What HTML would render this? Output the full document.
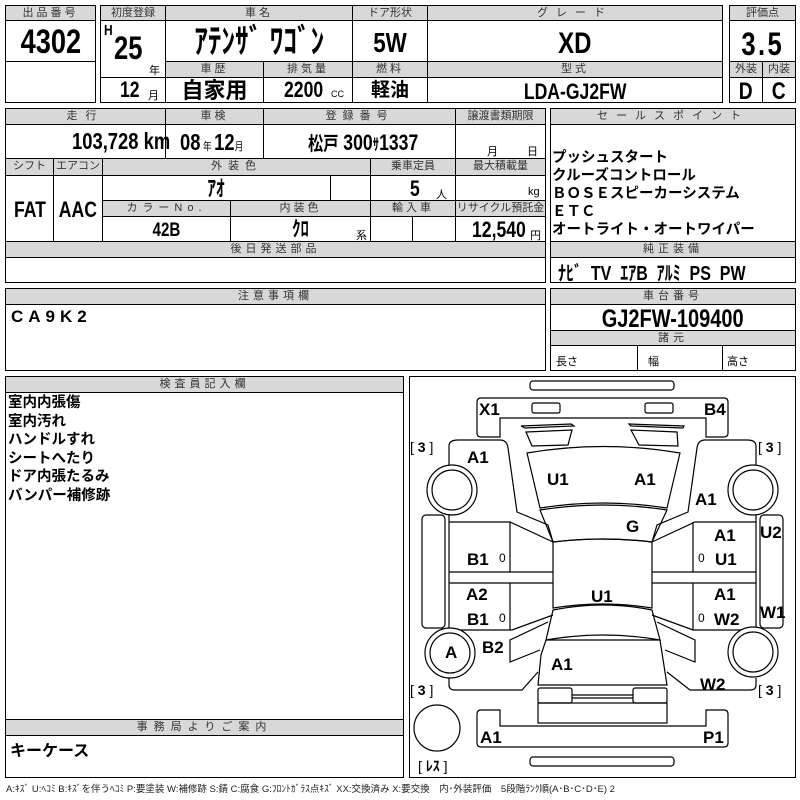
<!DOCTYPE html>
<html><head><meta charset="utf-8"><style>
*{margin:0;padding:0;box-sizing:border-box}
body{width:800px;height:800px;background:#fff;position:relative;overflow:hidden;font-family:"Liberation Sans","Noto Sans CJK JP",sans-serif;color:#000}
.b{position:absolute;border:1.5px solid #000}
.h{position:absolute;background:#d8d8d8;border:1px solid #000;font-size:11px;color:#333;text-align:center;line-height:14px;letter-spacing:3px;font-family:"Liberation Sans","Noto Sans CJK JP",sans-serif}
.c{position:absolute;border:1px solid #000;font-weight:bold;text-align:center;white-space:nowrap;overflow:hidden}
.t{position:absolute;font-weight:bold;white-space:nowrap}
.s{font-size:11px;font-weight:normal}
.n{display:inline-block;transform:scaleX(.8)}
.tl{transform-origin:left center}
</style></head><body>
<div class="b" style="left:5px;top:5px;width:91px;height:98px"></div>
<div class="h" style="left:5px;top:5px;width:91px;height:16px">出品番号</div>
<div class="c" style="left:5px;top:20px;width:91px;height:42px;font-size:34px;line-height:42px"><span class="n">4302</span></div>
<div class="b" style="left:100px;top:5px;width:623px;height:98px"></div>
<div class="h" style="left:100px;top:5px;width:66px;height:16px;letter-spacing:0">初度登録</div>
<div class="h" style="left:165px;top:5px;width:188px;height:16px">車名</div>
<div class="h" style="left:352px;top:5px;width:76px;height:16px;letter-spacing:0">ドア形状</div>
<div class="h" style="left:427px;top:5px;width:296px;height:16px;letter-spacing:8px">グレード</div>
<div class="c" style="left:100px;top:20px;width:66px;height:58px;border-bottom:none"></div>
<div class="t" style="left:104px;top:22px;font-size:15px"><span class="n tl">H</span></div>
<div class="t" style="left:114px;top:30px;font-size:32px"><span class="n tl">25</span></div>
<div class="t s" style="left:149px;top:62px">年</div>
<div class="c" style="left:165px;top:20px;width:188px;height:42px;font-size:34px;line-height:42px"><span class="n">ｱﾃﾝｻﾞ ﾜｺﾞﾝ</span></div>
<div class="c" style="left:352px;top:20px;width:76px;height:42px;font-size:28px;line-height:44px"><span class="n">5W</span></div>
<div class="c" style="left:427px;top:20px;width:296px;height:42px;font-size:30px;line-height:46px"><span class="n">XD</span></div>
<div class="h" style="left:165px;top:61px;width:99px;height:17px">車歴</div>
<div class="h" style="left:263px;top:61px;width:90px;height:17px">排気量</div>
<div class="h" style="left:352px;top:61px;width:76px;height:17px">燃料</div>
<div class="h" style="left:427px;top:61px;width:296px;height:17px">型式</div>
<div class="c" style="left:100px;top:77px;width:66px;height:26px"></div>
<div class="t" style="left:120px;top:77px;font-size:22px"><span class="n tl">12</span></div><div class="t s" style="left:148px;top:87px">月</div>
<div class="c" style="left:165px;top:77px;width:99px;height:26px;font-size:22px;line-height:26px">自家用</div>
<div class="c" style="left:263px;top:77px;width:90px;height:26px"></div>
<div class="t" style="left:284px;top:77px;font-size:22px"><span class="n tl">2200</span></div><div class="t s" style="left:331px;top:89px;font-size:9px">CC</div>
<div class="c" style="left:352px;top:77px;width:76px;height:26px;font-size:19px;line-height:26px">軽油</div>
<div class="c" style="left:427px;top:77px;width:296px;height:26px;font-size:22px;line-height:28px"><span class="n">LDA-GJ2FW</span></div>
<div class="b" style="left:729px;top:5px;width:67px;height:98px"></div>
<div class="h" style="left:729px;top:5px;width:67px;height:16px;letter-spacing:0">評価点</div>
<div class="c" style="left:729px;top:20px;width:67px;height:42px;font-size:32px;line-height:46px;letter-spacing:3px"><span class="n">3.5</span></div>
<div class="h" style="left:729px;top:61px;width:34px;height:17px;letter-spacing:0">外装</div>
<div class="h" style="left:762px;top:61px;width:34px;height:17px;letter-spacing:0">内装</div>
<div class="c" style="left:729px;top:77px;width:34px;height:26px;font-size:24px;line-height:28px"><span class="n">D</span></div>
<div class="c" style="left:762px;top:77px;width:34px;height:26px;font-size:24px;line-height:28px"><span class="n">C</span></div>
<div class="b" style="left:5px;top:108px;width:541px;height:175px"></div>
<div class="h" style="left:5px;top:108px;width:161px;height:17px;letter-spacing:8px">走行</div>
<div class="h" style="left:165px;top:108px;width:99px;height:17px">車検</div>
<div class="h" style="left:263px;top:108px;width:193px;height:17px;letter-spacing:6px">登録番号</div>
<div class="h" style="left:455px;top:108px;width:91px;height:17px;letter-spacing:0">譲渡書類期限</div>
<div class="c" style="left:5px;top:124px;width:161px;height:35px"></div>
<div class="t" style="left:72px;top:128px;font-size:23px"><span class="n tl">103,728 km</span></div>
<div class="c" style="left:165px;top:124px;width:99px;height:35px"></div>
<div class="t" style="left:180px;top:129px;font-size:23px"><span class="n tl">08<span class="s"> 年 </span>12<span class="s">月</span></span></div>
<div class="c" style="left:263px;top:124px;width:193px;height:35px"></div>
<div class="t" style="left:308px;top:129px;font-size:22px"><span class="n tl"><span style="font-size:19px">松戸</span> 300<span style="font-size:16px">ｻ</span>1337</span></div>
<div class="c" style="left:455px;top:124px;width:91px;height:35px"></div>
<div class="t s" style="left:487px;top:143px">月</div><div class="t s" style="left:527px;top:143px">日</div>
<div class="h" style="left:5px;top:158px;width:49px;height:18px;letter-spacing:0">シフト</div>
<div class="h" style="left:53px;top:158px;width:50px;height:18px;letter-spacing:0">エアコン</div>
<div class="h" style="left:102px;top:158px;width:269px;height:18px;letter-spacing:6px">外装色</div>
<div class="h" style="left:370px;top:158px;width:86px;height:18px;letter-spacing:0">乗車定員</div>
<div class="h" style="left:455px;top:158px;width:91px;height:18px;letter-spacing:0">最大積載量</div>
<div class="c" style="left:5px;top:175px;width:49px;height:67px;font-size:22px;line-height:67px"><span class="n">FAT</span></div>
<div class="c" style="left:53px;top:175px;width:50px;height:67px;font-size:22px;line-height:67px"><span class="n">AAC</span></div>
<div class="c" style="left:102px;top:175px;width:229px;height:26px;font-size:22px;line-height:26px"><span class="n">ｱｵ</span></div>
<div class="c" style="left:330px;top:175px;width:41px;height:26px"></div>
<div class="c" style="left:370px;top:175px;width:86px;height:26px"></div>
<div class="t" style="left:410px;top:176px;font-size:22px"><span class="n tl">5</span></div><div class="t s" style="left:436px;top:186px">人</div>
<div class="c" style="left:455px;top:175px;width:91px;height:26px"></div><div class="t s" style="left:528px;top:186px">kg</div>
<div class="h" style="left:102px;top:200px;width:129px;height:17px;letter-spacing:5px">カラーNo.</div>
<div class="h" style="left:230px;top:200px;width:141px;height:17px">内装色</div>
<div class="h" style="left:370px;top:200px;width:86px;height:17px">輸入車</div>
<div class="h" style="left:455px;top:200px;width:91px;height:17px;letter-spacing:0">リサイクル預託金</div>
<div class="c" style="left:102px;top:216px;width:129px;height:26px;font-size:19px;line-height:27px"><span class="n">42B</span></div>
<div class="c" style="left:230px;top:216px;width:141px;height:26px;font-size:21px;line-height:26px"><span class="n">ｸﾛ</span></div>
<div class="t s" style="left:356px;top:227px">系</div>
<div class="c" style="left:370px;top:216px;width:43px;height:26px"></div>
<div class="c" style="left:412px;top:216px;width:44px;height:26px"></div>
<div class="c" style="left:455px;top:216px;width:91px;height:26px"></div>
<div class="t" style="left:472px;top:217px;font-size:22px"><span class="n tl">12,540</span></div><div class="t s" style="left:530px;top:227px">円</div>
<div class="h" style="left:5px;top:241px;width:541px;height:17px;letter-spacing:4px">後日発送部品</div>
<div class="b" style="left:550px;top:108px;width:246px;height:150px"></div>
<div class="h" style="left:550px;top:108px;width:246px;height:17px;letter-spacing:8px">セールスポイント</div>
<div class="t" style="left:552px;top:149px;font-size:14.5px;line-height:18px">プッシュスタート<br>クルーズコントロール<br>ＢＯＳＥスピーカーシステム<br>ＥＴＣ<br>オートライト・オートワイパー</div>
<div class="b" style="left:550px;top:241px;width:246px;height:42px"></div>
<div class="h" style="left:550px;top:241px;width:246px;height:17px;letter-spacing:4px">純正装備</div>
<div class="t" style="left:558px;top:257px;font-size:20px"><span class="n tl">ﾅﾋﾞ&nbsp; TV&nbsp; ｴｱB&nbsp; ｱﾙﾐ&nbsp; PS&nbsp; PW</span></div>
<div class="b" style="left:5px;top:288px;width:541px;height:83px"></div>
<div class="h" style="left:5px;top:288px;width:541px;height:17px;letter-spacing:4px">注意事項欄</div>
<div class="t" style="left:11px;top:307px;font-size:17px;letter-spacing:5px">CA9K2</div>
<div class="b" style="left:550px;top:288px;width:246px;height:83px"></div>
<div class="h" style="left:550px;top:288px;width:246px;height:17px;letter-spacing:4px">車台番号</div>
<div class="c" style="left:550px;top:304px;width:246px;height:27px;font-size:25px;line-height:28px"><span class="n">GJ2FW-109400</span></div>
<div class="h" style="left:550px;top:330px;width:246px;height:16px;letter-spacing:4px">諸元</div>
<div class="c" style="left:550px;top:345px;width:88px;height:26px"></div>
<div class="c" style="left:637px;top:345px;width:86px;height:26px"></div>
<div class="c" style="left:722px;top:345px;width:74px;height:26px"></div>
<div class="t s" style="left:556px;top:353px">長さ</div><div class="t s" style="left:648px;top:353px">幅</div><div class="t s" style="left:727px;top:353px">高さ</div>
<div class="b" style="left:5px;top:376px;width:399px;height:402px"></div>
<div class="h" style="left:5px;top:376px;width:399px;height:17px;letter-spacing:4px">検査員記入欄</div>
<div class="t" style="left:8px;top:394px;font-size:14.5px;line-height:18.5px">室内内張傷<br>室内汚れ<br>ハンドルすれ<br>シートへたり<br>ドア内張たるみ<br>バンパー補修跡</div>
<div class="h" style="left:5px;top:719px;width:399px;height:17px;letter-spacing:6px">事務局よりご案内</div>
<div class="t" style="left:10px;top:737px;font-size:16px">キーケース</div>
<div class="b" style="left:409px;top:376px;width:387px;height:402px"></div>
<svg style="position:absolute;left:0;top:0" width="800" height="800" fill="none" stroke="#000" stroke-width="1.2">
<rect x="530" y="381" width="144" height="9" rx="3"/>
<path d="M477,402 Q477,398 481,398 L724,398 Q728,398 728,402 L728,433 Q728,437 724,437 L706,437 L706,418 L500,418 L500,437 L481,437 Q477,437 477,433 Z"/>
<rect x="532" y="403" width="28" height="10" rx="2"/><rect x="645" y="403" width="28" height="10" rx="2"/>
<path d="M521,426 L571,424 L574,426 L525,428 Z M629,424 L684,426 L683,428 L631,426 Z"/>
<path d="M526,432 L572,430 L568,445 L532,446 Z M631,430 L677,432 L678,446 L639,445 Z"/>
<path d="M527,453 Q603,440 680,453 L667,508 Q603,498 540,508 Z"/>
<path d="M540,510 Q603,500 667,510 L652,542 Q603,536 553,542 Z"/>
<path d="M553,542 Q603,536 652,542 L652,608 Q603,600 553,608 Z"/>
<path d="M553,610 Q603,600 652,610 L660,640 Q603,630 546,640 Z"/>
<path d="M546,640 L660,640 L667,685 L538,685 L541,655 Z"/>
<rect x="538" y="688" width="34" height="15" rx="2"/><rect x="633" y="688" width="34" height="15" rx="2"/>
<line x1="572" y1="695" x2="633" y2="695"/><line x1="572" y1="698" x2="633" y2="698"/>
<rect x="538" y="703" width="129" height="20"/>
<path d="M477,714 Q477,710 481,710 L500,710 L500,726 L706,726 L706,710 L724,710 Q728,710 728,714 L728,743 Q728,747 724,747 L481,747 Q477,747 477,743 Z"/>
<rect x="530" y="757" width="144" height="9" rx="3"/>
<path d="M449,465 L449,446 Q449,440 458,440 L500,440 Q507,440 508,448 L517,512 L548,525 L553,542"/>
<path d="M449,515 L449,630 L512,630 L553,615 M449,522 L510,522 L553,542 M449,572 L553,572 M449,583 L553,583"/>
<line x1="510" y1="522" x2="510" y2="572"/><line x1="510" y1="583" x2="510" y2="630"/>
<path d="M756,465 L756,446 Q756,440 747,440 L705,440 Q698,440 697,448 L688,512 L657,525 L652,542"/>
<path d="M756,515 L756,630 L693,630 L652,615 M756,522 L695,522 L652,542 M756,572 L652,572 M756,583 L652,583"/>
<line x1="693" y1="522" x2="693" y2="572"/><line x1="693" y1="583" x2="693" y2="630"/>
<path d="M449,678 L449,685 Q449,690 455,690 L522,690 L538,672 M540,650 L510,662 L510,640 L548,622"/>
<path d="M756,678 L756,685 Q756,690 750,690 L690,690 L667,672 M665,650 L695,662 L695,640 L657,622"/>
<rect x="422" y="515" width="23" height="113" rx="4"/><rect x="760" y="515" width="23" height="113" rx="4"/>
<circle cx="452" cy="490" r="25" fill="#fff"/><circle cx="452" cy="490" r="20"/>
<circle cx="753" cy="490" r="25" fill="#fff"/><circle cx="753" cy="490" r="20"/>
<circle cx="450" cy="653" r="25" fill="#fff"/><circle cx="450" cy="653" r="20"/>
<circle cx="753" cy="652" r="25" fill="#fff"/><circle cx="753" cy="652" r="20"/>
<circle cx="437" cy="728" r="23"/>
</svg>
<div style="position:absolute;left:0;top:0;font-weight:bold;font-size:17px">
<span class="t" style="left:479px;top:400px">X1</span><span class="t" style="left:704px;top:400px">B4</span>
<span class="t" style="left:467px;top:448px">A1</span><span class="t" style="left:547px;top:470px">U1</span><span class="t" style="left:634px;top:470px">A1</span>
<span class="t" style="left:695px;top:490px">A1</span><span class="t" style="left:626px;top:517px">G</span>
<span class="t" style="left:714px;top:526px">A1</span><span class="t" style="left:760px;top:523px">U2</span>
<span class="t" style="left:467px;top:550px">B1</span><span class="t" style="left:715px;top:550px">U1</span>
<span class="t" style="left:466px;top:585px">A2</span><span class="t" style="left:591px;top:587px">U1</span><span class="t" style="left:714px;top:585px">A1</span>
<span class="t" style="left:760px;top:603px">W1</span>
<span class="t" style="left:467px;top:610px">B1</span><span class="t" style="left:714px;top:610px">W2</span>
<span class="t" style="left:445px;top:643px">A</span><span class="t" style="left:482px;top:638px">B2</span>
<span class="t" style="left:551px;top:655px">A1</span><span class="t" style="left:700px;top:675px">W2</span>
<span class="t" style="left:480px;top:728px">A1</span><span class="t" style="left:703px;top:728px">P1</span>
</div>
<div style="position:absolute;left:0;top:0;font-size:14px">
<span class="t" style="left:410px;top:439px;font-weight:normal">[ <b>3</b> ]</span>
<span class="t" style="left:758px;top:439px;font-weight:normal">[ <b>3</b> ]</span>
<span class="t" style="left:410px;top:682px;font-weight:normal">[ <b>3</b> ]</span>
<span class="t" style="left:758px;top:682px;font-weight:normal">[ <b>3</b> ]</span>
<span class="t" style="left:418px;top:756px;font-weight:normal">[ <b>ﾚｽ</b> ]</span>
<span class="t" style="left:499px;top:551px;font-weight:normal;font-size:12px">0</span>
<span class="t" style="left:698px;top:551px;font-weight:normal;font-size:12px">0</span>
<span class="t" style="left:499px;top:611px;font-weight:normal;font-size:12px">0</span>
<span class="t" style="left:698px;top:611px;font-weight:normal;font-size:12px">0</span>
</div>
<div class="t s" style="left:6px;top:781px;font-size:9.5px;color:#222">A:ｷｽﾞ U:ﾍｺﾐ B:ｷｽﾞを伴うﾍｺﾐ P:要塗装 W:補修跡 S:錆 C:腐食 G:ﾌﾛﾝﾄｶﾞﾗｽ点ｷｽﾞ XX:交換済み X:要交換　内･外装評価　5段階ﾗﾝｸ順(A･B･C･D･E) 2</div>
</body></html>
